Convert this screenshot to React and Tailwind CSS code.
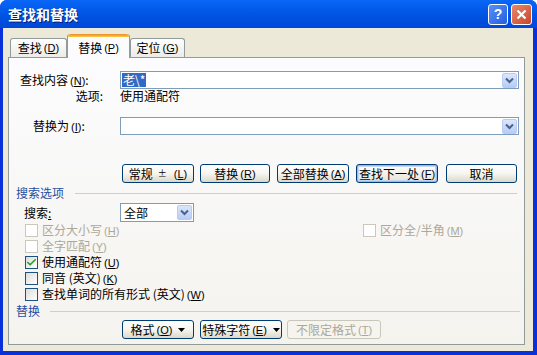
import { Check } from "lucide-react"

const cjk = "font-['Noto_Sans_CJK_SC','Noto_Sans',sans-serif]"

function Mn({ k }) {
  return (
    <span className="ml-[2px] text-[11px] font-['Liberation_Sans',sans-serif]">
      (<u>{k}</u>)
    </span>
  )
}

function Arrow() {
  return (
    <div className="w-[15px] h-[15px] mr-px rounded-[2px] border border-[#b9cbf3] bg-gradient-to-b from-[#dbe6fd] to-[#b6ccf8] flex items-center justify-center">
      <svg width="9" height="7" viewBox="0 0 9 7">
        <path d="M1 1.5 L4.5 5 L8 1.5" stroke="#4d6185" strokeWidth="2" fill="none" />
      </svg>
    </div>
  )
}

function Tri() {
  return (
    <svg width="7" height="4" viewBox="0 0 7 4" className="ml-[6px]">
      <path d="M0 0 H7 L3.5 4 Z" fill="black" />
    </svg>
  )
}

function Btn({ w, children, focus, disabled }) {
  let cls = "h-[19px] rounded-[3px] border flex items-center justify-center text-[12px] leading-[14px] shrink-0 "
  if (disabled) cls += "border-[#c9c7ba] bg-[#f5f4ef] text-[#aca899]"
  else if (focus) cls += "border-[#003c74] bg-gradient-to-b from-white to-[#e6e3d6] shadow-[inset_0_0_0_1px_#9db9eb,inset_0_0_0_2px_#c5d5f5]"
  else cls += "border-[#003c74] bg-gradient-to-b from-white via-[#f6f5f1] to-[#dcd8c9]"
  return (
    <div className={cls} style={{ width: w }}>
      {children}
    </div>
  )
}

function Box({ checked, disabled }) {
  return (
    <div
      className={
        "w-[13px] h-[13px] border flex items-center justify-center shrink-0 " +
        (disabled ? "border-[#cac8bb] bg-white" : "border-[#1c5180] bg-gradient-to-br from-[#dcdcd7] to-white")
      }
    >
      {checked && <Check size={11} strokeWidth={3.5} className="text-[#21a121]" />}
    </div>
  )
}

function CheckRow({ label, k, checked, disabled }) {
  return (
    <div className="flex items-center gap-[4px] h-[16px]">
      <Box checked={checked} disabled={disabled} />
      <span className={"text-[12px] leading-[14px] " + (disabled ? "text-[#aca899]" : "text-black")}>
        {label}
        <Mn k={k} />
      </span>
    </div>
  )
}

export default function App() {
  return (
    <div className={"w-[537px] h-[355px] bg-[#0831d9] flex flex-col overflow-hidden rounded-t-[7px] " + cjk}>
      {/* Title bar */}
      <div className="h-[28px] shrink-0 flex items-center justify-between bg-gradient-to-b from-[#0a66f6] via-[#0055e5] to-[#0047d8] pl-[8px] pr-[5px]">
        <span className="text-white font-bold text-[14px] leading-[16px] [text-shadow:1px_1px_0_#0a1e6e]">查找和替换</span>
        <div className="flex gap-[3px] items-center">
          <div className="w-[20px] h-[21px] rounded-[3px] border border-white bg-gradient-to-br from-[#5a8ff7] to-[#1e5ee0] flex items-center justify-center text-white font-bold text-[14px] font-['Liberation_Sans',sans-serif]">
            ?
          </div>
          <div className="w-[21px] h-[21px] rounded-[3px] border border-white bg-gradient-to-br from-[#e8896a] to-[#c8432a] flex items-center justify-center">
            <svg width="11" height="11" viewBox="0 0 11 11">
              <path d="M1.5 1.5 L9.5 9.5 M9.5 1.5 L1.5 9.5" stroke="white" strokeWidth="2.2" />
            </svg>
          </div>
        </div>
      </div>

      {/* Body */}
      <div className="flex-1 ml-[3px] mr-[4px] mb-[4px] bg-[#ece9d8] pt-[5px] pl-[5px] pr-[8px]">
        {/* Tabs */}
        <div className="flex items-end pl-[2px] h-[24px]">
          <div className="w-[57px] h-[19px] border border-b-0 border-[#919b9c] rounded-t-[3px] bg-gradient-to-b from-white to-[#ecebe6] flex items-center justify-center text-[12px] leading-[14px]">
            查找<Mn k="D" />
          </div>
          <div className="relative z-10 w-[63px] h-[24px] -mb-px border-x border-[#919b9c] rounded-t-[3px] bg-[#fcfcfe] flex flex-col">
            <div className="h-[3px] rounded-t-[3px] bg-gradient-to-b from-[#e68b2c] to-[#ffc73c]" />
            <div className="flex-1 flex items-center justify-center text-[12px] leading-[14px]">
              替换<Mn k="P" />
            </div>
          </div>
          <div className="w-[55px] h-[19px] border border-b-0 border-[#919b9c] rounded-t-[3px] bg-gradient-to-b from-white to-[#ecebe6] flex items-center justify-center text-[12px] leading-[14px]">
            定位<Mn k="G" />
          </div>
        </div>

        {/* Panel */}
        <div className="h-[288px] border border-[#919b9c] bg-gradient-to-b from-[#fcfcfe] to-[#f4f3ee] text-[12px] leading-[14px] text-black">
          {/* Find */}
          <div className="flex items-center mt-[13px] h-[18px]">
            <div className="w-[111px] pl-[11px]">
              查找内容<Mn k="N" />:
            </div>
            <div className="w-[399px] h-[18px] border border-[#7f9db9] bg-white flex items-center justify-between">
              <span className="ml-[1px] px-[1px] bg-[#316ac5] text-white">老\*</span>
              <Arrow />
            </div>
          </div>
          <div className="flex items-center h-[14px]">
            <div className="w-[111px] pr-[17px] text-right">选项:</div>
            <div>使用通配符</div>
          </div>

          {/* Replace */}
          <div className="flex items-center mt-[14px] h-[18px]">
            <div className="w-[111px] pl-[24px]">
              替换为<Mn k="I" />:
            </div>
            <div className="w-[399px] h-[18px] border border-[#7f9db9] bg-white flex items-center justify-end">
              <Arrow />
            </div>
          </div>

          {/* Buttons */}
          <div className="flex mt-[29px] pl-[113px]">
            <Btn w={72}>
              常规 <span className="mx-[5px] text-[9px]">±</span>
              <Mn k="L" />
            </Btn>
            <div className="ml-[6px]">
              <Btn w={70}>
                替换<Mn k="R" />
              </Btn>
            </div>
            <div className="ml-[7px]">
              <Btn w={72}>
                全部替换<Mn k="A" />
              </Btn>
            </div>
            <div className="ml-[7px]">
              <Btn w={82} focus>
                查找下一处<Mn k="F" />
              </Btn>
            </div>
            <div className="ml-[8px]">
              <Btn w={71}>取消</Btn>
            </div>
          </div>

          {/* Search options */}
          <div className="flex items-center h-[14px] mt-[3px] pl-[7px] pr-[7px]">
            <span className="text-[#1f4fa0]">搜索选项</span>
            <div className="flex-1 ml-[11px] h-px bg-[#d0d0bf]" />
          </div>
          <div className="flex items-center mt-[3px] h-[19px]">
            <div className="w-[111px] pl-[15px]">
              搜索<u>:</u>
            </div>
            <div className="w-[74px] h-[19px] border border-[#7f9db9] bg-white flex items-center justify-between">
              <span className="ml-[3px]">全部</span>
              <Arrow />
            </div>
          </div>
          <div className="pl-[16px]">
            <div className="flex">
              <div className="w-[338px]">
                <CheckRow label="区分大小写" k="H" disabled />
              </div>
              <CheckRow label="区分全/半角" k="M" disabled />
            </div>
            <CheckRow label="全字匹配" k="Y" disabled />
            <CheckRow label="使用通配符" k="U" checked />
            <CheckRow label="同音 (英文)" k="K" />
            <CheckRow label="查找单词的所有形式 (英文)" k="W" />
          </div>

          {/* Replace section */}
          <div className="flex items-center h-[14px] mt-[2px] pl-[7px] pr-[4px]">
            <span className="text-[#1f4fa0]">替换</span>
            <div className="flex-1 ml-[10px] h-px bg-[#d0d0bf]" />
          </div>
          <div className="flex mt-[2px] pl-[113px]">
            <Btn w={72}>
              格式<Mn k="O" />
              <Tri />
            </Btn>
            <div className="ml-[6px]">
              <Btn w={82}>
                特殊字符<Mn k="E" />
                <Tri />
              </Btn>
            </div>
            <div className="ml-[5px]">
              <Btn w={94} disabled>
                不限定格式<Mn k="T" />
              </Btn>
            </div>
          </div>
        </div>
      </div>
    </div>
  )
}
